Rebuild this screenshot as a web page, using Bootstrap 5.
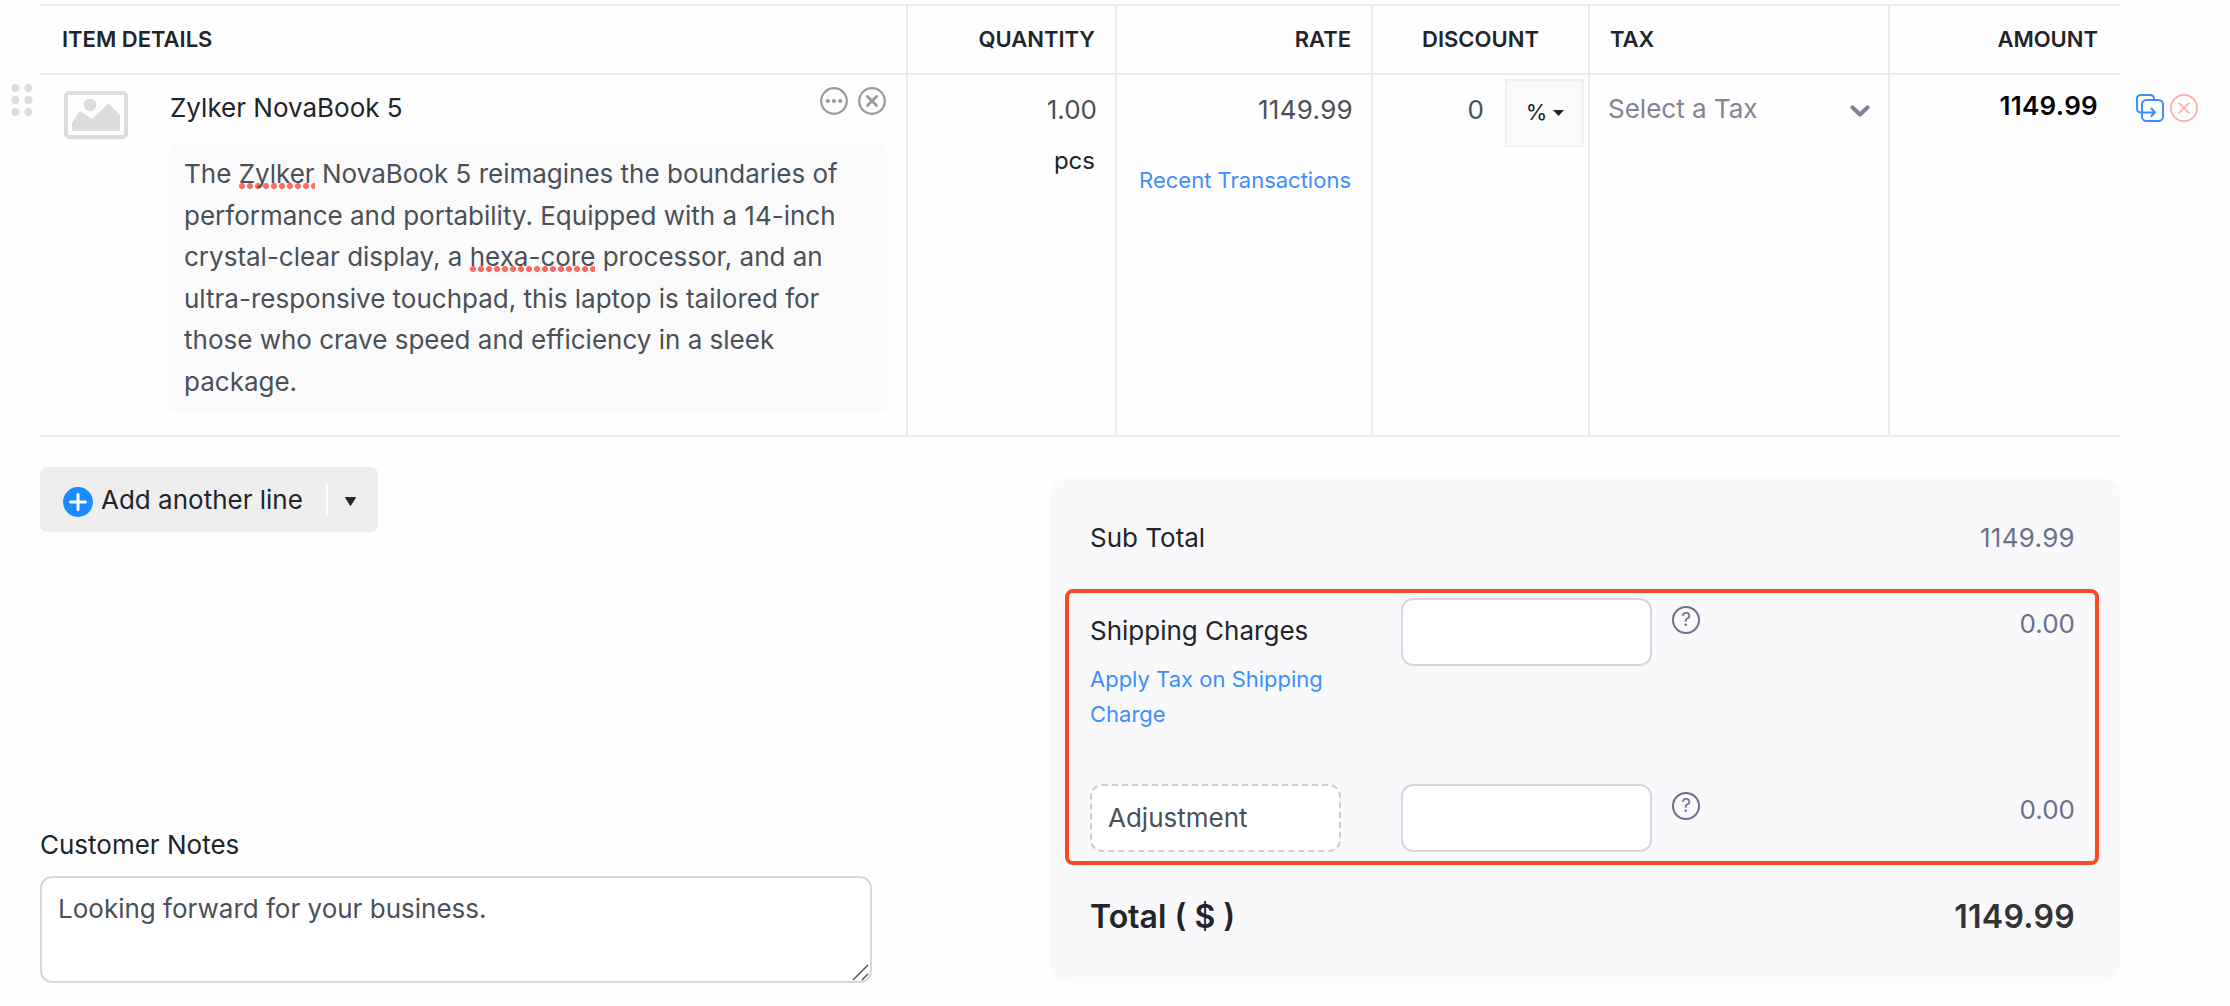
<!DOCTYPE html>
<html lang="en">
<head>
  <meta charset="UTF-8">
  <title>New Invoice</title>
  <link href="https://cdn.jsdelivr.net/npm/bootstrap@5.3.3/dist/css/bootstrap.min.css" rel="stylesheet">
  <style>
    body {
      font-family: Inter, "Liberation Sans", sans-serif;
      font-size: 26px;
      line-height: 39px;
      color: #212529;
      background-color: #fefefe;
      overflow: hidden;
    }

    svg {
      display: block;
      flex: none;
    }

    .page {
      width: 2230px;
      height: 1006px;
      padding-top: 4px;
    }

    .gutter-left {
      width: 40px;
      padding: 79px 0 0 11px;
    }

    .gutter-right {
      padding: 89px 0 0 15px;
      gap: 4px;
    }

    /* Item table */
    .item-table {
      width: 2080px;
      table-layout: fixed;
      border-collapse: separate;
      border-spacing: 0;
    }

    .item-table th {
      height: 71px;
      padding: 0 20px;
      border-top: 2px solid #ebeaf2;
      border-bottom: 2px solid #ebeaf2;
      font-size: 22px;
      font-weight: 600;
      line-height: 33px;
    }

    .item-table th:first-child,
    .item-table th:last-child {
      padding: 0 22px;
    }

    .item-table td {
      height: 362px;
      padding: 0 21px;
      vertical-align: top;
      border-bottom: 2px solid #ebeaf2;
    }

    .item-table th:not(:last-child),
    .item-table td:not(:last-child) {
      border-right: 2px solid #ebeaf2;
    }

    .item-table td.item-cell {
      padding: 12px 18px 0 24px;
    }

    .item-table td.qty-cell,
    .item-table td.rate-cell {
      padding: 15px 20px 0;
    }

    .item-name {
      padding: 1px 0 0 2px;
    }

    .item-close {
      margin-left: 10px;
    }

    .field-value {
      color: #495057;
      margin-right: -2px;
    }

    .amount-value {
      letter-spacing: .3px;
    }

    .unit {
      font-size: 24px;
      line-height: 36px;
      margin-top: 14px;
    }

    .link-text {
      font-size: 22px;
      line-height: 35px;
      color: #408dfb;
      text-decoration: none;
    }

    .recent {
      margin-top: 30px;
      white-space: nowrap;
    }

    .description {
      width: 720px;
      height: 270px;
      margin-top: 16px;
      padding: 10px 16px;
      border-radius: 10px;
      background-color: #fbfafa;
      color: #495057;
      line-height: 41.6px;
    }

    .misspelt {
      background: radial-gradient(circle at 3px 3px, #ff6b63 2.7px, transparent 3.3px) left bottom / 8px 6px repeat-x;
    }

    .item-table td.discount-cell {
      padding: 4px 4px 0 0;
    }

    .discount-value {
      padding-top: 11px;
      color: #495057;
    }

    .discount-type {
      width: 79px;
      height: 68px;
      margin-left: 21px;
      padding: 0 0 1px 1px;
      gap: 6px;
      font-size: 22px;
      background-color: #fafafa;
      border: 2px solid #f0f0f0;
    }

    .item-table td.tax-cell {
      padding: 14px 18px 0;
      color: #858199;
    }

    .item-table td.amount-cell {
      padding: 11px 22px 0;
      color: #000;
      font-weight: 600;
    }

    /* Lower section */
    .lower {
      padding: 30px 110px 0 40px;
    }

    .left-side {
      width: 832px;
      height: 516px;
    }

    .add-line {
      width: 338px;
      height: 65px;
      padding-left: 23px;
      border-radius: 7px;
      background-color: #eee;
    }

    .add-line .divider {
      width: 2px;
      height: 31px;
      margin: 0 17px 0 23px;
      background-color: #fff;
    }

    .notes {
      height: 107px;
      padding: 11px 16px;
      font-size: 26px;
      line-height: 39px;
      color: #495057;
      border: 2px solid #d7d5e2;
      border-radius: 12px;
      resize: none;
    }

    .notes-wrap {
      margin-top: 12px;
    }

    .resize-grip {
      position: absolute;
      right: 3px;
      bottom: 2px;
    }

    .summary {
      width: 1070px;
      height: 506px;
      margin-top: 10px;
      padding-top: 41px;
      border-radius: 20px;
      background-color: #f9f9fb;
    }

    .summary-line {
      padding: 0 45px 0 40px;
    }

    .muted-value {
      color: #6c718a;
    }

    .highlight {
      height: 276px;
      margin: 32px 21px 0 15px;
      padding: 5px 20px 0 21px;
      border: 4px solid #fa4a23;
      border-radius: 8px;
    }

    .charge-row {
      display: grid;
      grid-template-columns: 311px 251px 48px 1fr;
      height: 186px;
    }

    .charge-input {
      width: 251px;
      height: 68px;
      padding: 0 16px 2px;
      font-size: 26px;
      color: #495057;
      border: 2px solid #d7d5e2;
      border-radius: 12px;
    }

    .charge-input.dashed {
      border: 2px dashed #ccc;
    }

    .charge-label {
      width: 251px;
      padding-top: 13px;
    }

    .charge-value {
      padding-top: 6px;
    }

    .help {
      width: 28px;
      height: 28px;
      margin: 8px 0 0 20px;
      font-size: 19px;
      line-height: 24px;
      color: #6c718a;
      border: 2px solid #6c718a;
    }

    .grand-total {
      margin-top: 28px;
      font-size: 32px;
      line-height: 48px;
      font-weight: 600;
    }

    .grand-total .amount-value {
      color: #333;
    }
  </style>
</head>
<body>
<div class="page">

  <!-- Items -->
  <div class="d-flex align-items-start">
    <div class="gutter-left">
      <svg width="22" height="34" viewBox="0 0 22 34" fill="#dcdcdc">
        <circle cx="4.5" cy="5" r="4"/><circle cx="17.5" cy="5" r="4"/>
        <circle cx="4.5" cy="17" r="4"/><circle cx="17.5" cy="17" r="4"/>
        <circle cx="4.5" cy="29" r="4"/><circle cx="17.5" cy="29" r="4"/>
      </svg>
    </div>

    <table class="item-table">
      <colgroup>
        <col style="width: 868px"><col style="width: 209px"><col style="width: 256px">
        <col style="width: 217px"><col style="width: 300px"><col style="width: 230px">
      </colgroup>
      <thead>
      <tr>
        <th>ITEM DETAILS</th>
        <th class="text-end">QUANTITY</th>
        <th class="text-end">RATE</th>
        <th class="text-center">DISCOUNT</th>
        <th>TAX</th>
        <th class="text-end">AMOUNT</th>
      </tr>
      </thead>
      <tbody>
      <tr>
        <td class="item-cell">
          <div class="d-flex">
            <svg class="mt-1" width="64" height="48" viewBox="0 0 64 48">
              <rect x="2" y="2" width="60" height="44" rx="3" fill="none" stroke="#dcdcdc" stroke-width="4"/>
              <circle cx="26" cy="14" r="6.2" fill="#dcdcdc"/>
              <path d="M8 32 14.500 21.500Q16 20 17.500 21L28 28 44.500 12.500 56 24V38.500Q56 40 54.500 40H9.500Q8 40 8 38.500Z" fill="#dcdcdc"/>
            </svg>
            <div class="ms-auto">
              <div class="d-flex align-items-start">
                <span class="item-name me-auto">Zylker NovaBook 5</span>
                <svg width="28" height="28" viewBox="0 0 28 28" fill="none" stroke="#999" stroke-width="2.200">
                  <circle cx="14" cy="14" r="12.800"/>
                  <g fill="#999" stroke="none"><circle cx="7.800" cy="14" r="2.100"/><circle cx="14" cy="14" r="2.100"/><circle cx="20.200" cy="14" r="2.100"/></g>
                </svg>
                <svg class="item-close" width="30" height="28" viewBox="0 0 30 28" fill="none" stroke="#999" stroke-width="2.200">
                  <circle cx="14" cy="14" r="12.800"/>
                  <path d="M9.500 9.500l9 9M18.500 9.500l-9 9" stroke-width="2.800" stroke-linecap="round"/>
                </svg>
              </div>
              <div class="description">The <span class="misspelt">Zylker</span> NovaBook 5 reimagines the boundaries of performance and portability. Equipped with a 14-inch crystal-clear display, a <span class="misspelt">hexa-core</span> processor, and an ultra-responsive touchpad, this laptop is tailored for those who crave speed and efficiency in a sleek package.</div>
            </div>
          </div>
        </td>
        <td class="qty-cell text-end">
          <div class="field-value">1.00</div>
          <div class="unit">pcs</div>
        </td>
        <td class="rate-cell text-end">
          <div class="field-value amount-value">1149.99</div>
          <div class="recent"><a href="#" class="link-text">Recent Transactions</a></div>
        </td>
        <td class="discount-cell">
          <div class="d-flex justify-content-end">
            <span class="discount-value">0</span>
            <div class="discount-type d-flex align-items-center justify-content-center">
              <span>%</span>
              <svg width="11" height="6" viewBox="0 0 11 6"><path d="M0 0h11L5.500 6z" fill="#212529"/></svg>
            </div>
          </div>
        </td>
        <td class="tax-cell">
          <div class="d-flex justify-content-between">
            <span>Select a Tax</span>
            <svg width="20" height="39" viewBox="0 0 20 39" fill="none" stroke="#858199" stroke-width="4.200" stroke-linecap="round" stroke-linejoin="round"><path d="M2.500 18.500 10 25.500 17.500 18.500"/></svg>
          </div>
        </td>
        <td class="amount-cell amount-value text-end">1149.99</td>
      </tr>
      </tbody>
    </table>

    <div class="gutter-right d-flex">
      <svg width="30" height="30" viewBox="0 0 30 30" fill="none" stroke="#408dfb" stroke-width="2" stroke-linecap="round" stroke-linejoin="round">
        <rect x="7" y="7" width="21" height="21" rx="4.500"/>
        <path d="M19 7V6Q19 2 15 2H6Q2 2 2 6V15.500Q2 19.500 6 19.500H19.500M16.500 15.500 20 19.500 16.500 23"/>
      </svg>
      <svg width="30" height="30" viewBox="0 0 30 30" fill="none" stroke="#ffb0ad" stroke-width="1.800" stroke-linecap="round">
        <circle cx="15" cy="15" r="13.100"/>
        <path d="M10.200 10.200l9.600 9.600M19.800 10.200l-9.600 9.600"/>
      </svg>
    </div>
  </div>

  <div class="lower d-flex justify-content-between">

    <!-- Add line and notes -->
    <div class="left-side d-flex flex-column">
      <div class="add-line d-flex align-items-center">
        <svg class="mt-1" width="30" height="30" viewBox="0 0 30 30">
          <circle cx="15" cy="15" r="15" fill="#1a8cff"/>
          <path d="M15 7.500v15M7.500 15h15" stroke="#fff" stroke-width="3" stroke-linecap="round"/>
        </svg>
        <span class="add-text ms-2">Add another line</span>
        <span class="divider"></span>
        <svg class="mt-1" width="11" height="9" viewBox="0 0 11 9"><path d="M.5.500h10L5.500 8.500z" fill="#212529" stroke="#212529" stroke-linejoin="round"/></svg>
      </div>
      <label for="notes" class="mt-auto">Customer Notes</label>
      <div class="notes-wrap position-relative">
        <textarea id="notes" class="form-control notes">Looking forward for your business.</textarea>
        <svg class="resize-grip" width="17" height="17" viewBox="0 0 17 17" stroke="#555" stroke-width="1.500"><path d="M1 16 16 1M10 16l6-6"/></svg>
      </div>
    </div>

    <!-- Totals -->
    <div class="summary">
      <div class="summary-line d-flex justify-content-between">
        <span>Sub Total</span>
        <span class="muted-value amount-value">1149.99</span>
      </div>
      <div class="highlight">
        <div class="charge-row">
          <div class="charge-label">
            <div>Shipping Charges</div>
            <a href="#" class="link-text d-block mt-2 pt-1">Apply Tax on Shipping Charge</a>
          </div>
          <input type="text" class="form-control charge-input">
          <span class="help rounded-circle text-center">?</span>
          <span class="charge-value muted-value text-end">0.00</span>
        </div>
        <div class="charge-row">
          <input type="text" class="form-control charge-input dashed" value="Adjustment">
          <input type="text" class="form-control charge-input">
          <span class="help rounded-circle text-center">?</span>
          <span class="charge-value muted-value text-end">0.00</span>
        </div>
      </div>
      <div class="summary-line grand-total d-flex justify-content-between">
        <span>Total ( $ )</span>
        <span class="amount-value">1149.99</span>
      </div>
    </div>
  </div>
</div>

<script src="https://cdn.jsdelivr.net/npm/bootstrap@5.3.3/dist/js/bootstrap.bundle.min.js"></script>
</body>
</html>
